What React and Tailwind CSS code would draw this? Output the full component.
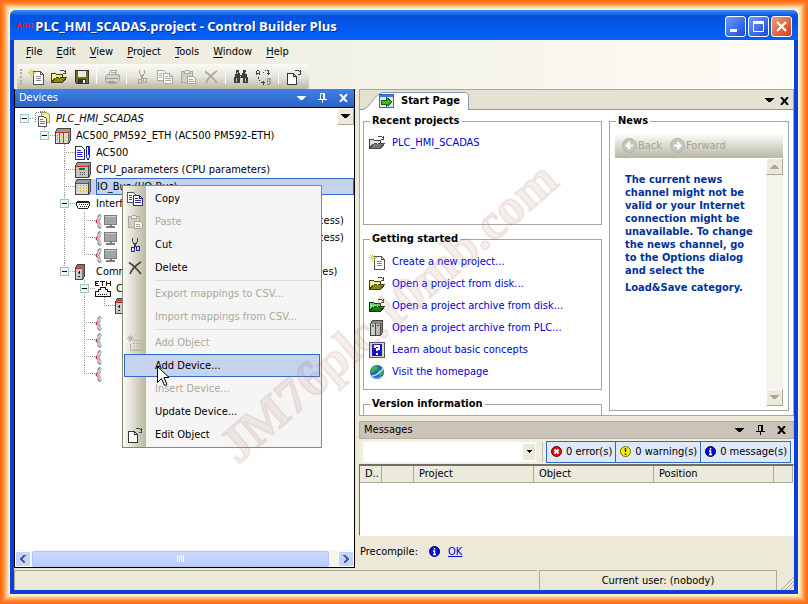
import React from "react";

/* ---------- icons ---------- */

function Svg({ w = 16, h = 16, children }) {
  return (
    <svg width={w} height={h} viewBox={`0 0 ${w} ${h}`} className="block shrink-0" shapeRendering="crispEdges" aria-hidden="true">
      {children}
    </svg>
  );
}

const NewIcon = () => (
  <Svg>
    <path d="M5.5 2.500h7l3 3v10h-10z" fill="#fff" stroke="#555" />
    <path d="M12.500 2.500v3h3" fill="none" stroke="#555" />
    <path d="M8 7.500h5M8 9.500h5M8 11.500h5" stroke="#888" />
    <path d="M3.500 0v8M0 3.500h8M1 1l5 5M6 1l-5 5" stroke="#e6dc1e" />
    <rect x="3" y="3" width="1" height="1" fill="#fff" />
  </Svg>
);

const FolderIcon = ({ back = "#f4ef7a", front = "#8d8318", line = "#45420d" }) => (
  <Svg>
    <path d="M.5 13.500v-9h4l1 1h6v3" fill={back} stroke={line} />
    <path d="M.5 13.500l4-5h11l-4 5z" fill={front} stroke={line} />
    <path d="M2 7.500h1M4 8.500h1M6 7.500h1M8 8.500h1" stroke="#fff" />
    <path d="M8.500 2.500l1-1h3l2 2M14.500 1v3h-3" fill="none" stroke="#444" />
  </Svg>
);

const SaveIcon = () => (
  <Svg>
    <path d="M1.500 1.500h13v13h-12l-1-1z" fill="#6f6f2a" stroke="#333" />
    <rect x="4" y="2" width="8" height="6" fill="#e8e8e8" />
    <rect x="4" y="10" width="8" height="5" fill="#333" />
    <rect x="9" y="11" width="2" height="3" fill="#fff" />
  </Svg>
);

const PrintIcon = () => (
  <Svg>
    <path d="M5.500 6l1-5h6l-1 5" fill="#eee" stroke="#aaa89c" />
    <path d="M7 3h4M7 5h4" stroke="#aaa89c" />
    <path d="M1.500 7.500l2-2h10l2 1v5l-2 2h-10l-2-1z" fill="#d4d3c8" stroke="#aaa89c" />
    <path d="M2 9.500h12M4 12.500h7" stroke="#9c9a8f" />
    <path d="M4 14.500h8" stroke="#aaa89c" />
  </Svg>
);

const CutIcon = ({ blade = "#444", grip = "#2a2a9a" }) => (
  <Svg>
    <path d="M5.500 1v3l3 5M10.500 1v3l-3 5" fill="none" stroke={blade} />
    <path d="M7.500 8v2M8.500 8v2" stroke={blade} />
    <rect x="4.500" y="10.500" width="3" height="4" fill="none" stroke={grip} />
    <rect x="9.500" y="9.500" width="3" height="4" fill="none" stroke={grip} />
    <path d="M7 9.500h3" stroke={grip} />
  </Svg>
);

const CopyIcon = ({ back = "#555", front = "#2a2a8c" }) => (
  <Svg>
    <path d="M.5 1.500h6l2 2v8h-8z" fill="#fff" stroke={back} />
    <path d="M2 4.500h3M2 6.500h3M2 8.500h3" stroke={back} />
    <path d="M6.500 4.500h6l3 3v7h-9z" fill="#fff" stroke={front} />
    <path d="M12.500 4.500v3h3M8 7.500h3M8 9.500h6M8 11.500h6" fill="none" stroke={front} />
  </Svg>
);

const PasteIcon = () => (
  <Svg>
    <path d="M1.500 2.500h11v11h-11z" fill="#cfcec6" stroke="#aaa89c" />
    <path d="M4.500 4.500v-2l1-1h3l1 1v2z" fill="#eee" stroke="#aaa89c" />
    <path d="M7.500 7.500h6l2 2v5h-8z" fill="#f4f4f0" stroke="#aaa89c" />
    <path d="M9 10.500h4M9 12.500h5" stroke="#aaa89c" />
  </Svg>
);

const DeleteIcon = ({ color = "#444" }) => (
  <svg width="16" height="16" viewBox="0 0 16 16" className="block shrink-0" aria-hidden="true">
    <path d="M2 2.500C6 5 10 9 14 14" fill="none" stroke={color} strokeWidth="1.600" />
    <path d="M14 2C9 5 5 9 3 14" fill="none" stroke={color} strokeWidth="1.600" />
  </svg>
);

const FindIcon = () => (
  <Svg>
    <path d="M3 1h3v3h1v2h2V4h1V1h3v3l1 2 1 4v4h-5v-5H7v5H1v-4l1-4 1-2z" fill="#3c3c3c" />
    <path d="M4 3v2M12 3v2M3 9v4M12 9v4" stroke="#bbb" />
    <rect x="7" y="7" width="1" height="1" fill="#ddd" />
  </Svg>
);

const ReplaceIcon = () => (
  <Svg>
    <path d="M.5 6v-3l1-2h1l1 2v3M1 4.500h2" fill="none" stroke="#444" />
    <path d="M11.500 9v6h2l1-1v-1l-1-1h-2M13 11.500l1-1v-1h-3" fill="none" stroke="#999" />
    <path d="M7 3.500h1M9 1.500h1M11 1.500h2M12.500 2v4M11 4.500h3" stroke="#444" />
    <path d="M2.500 8v2M3.500 11v1M5 13.500h4M7.500 11.500v4" stroke="#444" />
  </Svg>
);

const EditIcon = () => (
  <Svg>
    <path d="M1.500 4.500h6l3 3v8h-9z" fill="#fff" stroke="#333" />
    <path d="M7.500 4.500v3h3" fill="none" stroke="#333" />
    <path d="M8.500 2.500l1-1h3l2 2M14.500 1v4h-3" fill="none" stroke="#444" />
  </Svg>
);

const AddObjectIcon = () => (
  <Svg>
    <path d="M3.500 0v7M0 3.500h7M1 1l5 5M6 1l-5 5" stroke="#b4b3a6" />
    <path d="M7 5.500h8.500v10h-12v-7" fill="none" stroke="#b4b3a6" />
    <path d="M6 8h2M9 8h2M12 8h2M6 11h2M9 11h2M12 11h2M6 14h2M9 14h2M12 14h2" stroke="#b4b3a6" />
  </Svg>
);

const ProjectIcon = () => (
  <Svg>
    <path d="M.5 1.500h9M.5 1.500v10M9.500 .5h-6" fill="none" stroke="#777" strokeDasharray="1 1" />
    <path d="M6.500 1.500h5l3 2v8h-8z" fill="#f3ef80" stroke="#999" />
    <path d="M3.500 5.500h5l3 2v8h-8z" fill="#fff" stroke="#555" />
    <path d="M5 8.500h3M5 10.500h5M5 12.500h5" stroke="#777" />
  </Svg>
);

const RackIcon = () => (
  <Svg>
    <path d="M.5 3.500l2-3h13v12l-2 3h-13z" fill="#9a9a9a" stroke="#444" />
    <rect x="1" y="4" width="12" height="11" fill="#ddd" />
    <path d="M4.500 4v11M8.500 4v11M13.500 3v12" stroke="#666" />
    <rect x="1" y="4" width="12" height="1" fill="#d22" />
    <path d="M2.500 7v6" stroke="#888" strokeDasharray="1 1" />
    <rect x="6" y="7" width="2" height="3" fill="#ece22c" />
    <rect x="6" y="11" width="2" height="3" fill="#ece22c" />
    <rect x="10" y="7" width="2" height="3" fill="#ece22c" />
    <rect x="10" y="11" width="2" height="3" fill="#ece22c" />
  </Svg>
);

const AppIcon = () => (
  <Svg>
    <path d="M.5 1.500h6l3 3v10h-9z" fill="#fff" stroke="#333" />
    <path d="M2 5.500h4M2 7.500h6M2 9.500h5M2 11.500h6" stroke="#22f" />
    <path d="M11.500 1.500h3v10l-1 3h-1l-1-3z" fill="#fff" stroke="#22c" />
    <path d="M13 2v8" stroke="#22c" />
  </Svg>
);

const CpuIcon = () => (
  <Svg>
    <path d="M.5 3.500l2-3h13v12l-2 3h-13z" fill="#9a9a9a" stroke="#444" />
    <rect x="1" y="4" width="12" height="11" fill="#c4c4c4" />
    <rect x="1" y="4" width="12" height="1" fill="#d22" />
    <rect x="4" y="6" width="6" height="2" fill="#187818" />
    <path d="M5 10.500h5M5 12.500h5" stroke="#555" strokeDasharray="1 1" />
    <path d="M13.500 3v12" stroke="#444" />
  </Svg>
);

const IoIcon = () => (
  <Svg>
    <path d="M.5 3.500l2-3h13v12l-2 3h-13z" fill="#9a9a9a" stroke="#444" />
    <rect x="1" y="4" width="12" height="11" fill="#dcdcdc" />
    <rect x="1" y="4" width="12" height="1" fill="#d22" />
    {[2, 5, 8, 11].map((x) => (
      <React.Fragment key={x}>
        <rect x={x} y="6" width="1" height="1" fill="#888" />
        <rect x={x} y="8" width="1" height="2" fill="#e5c81e" />
        <rect x={x} y="11" width="1" height="2" fill="#e5c81e" />
      </React.Fragment>
    ))}
    <path d="M13.500 3v12" stroke="#444" />
  </Svg>
);

const SerialIcon = () => (
  <Svg>
    <path d="M1.500 6.500l1-1h11l1 1v3l-2 3h-9l-2-3z" fill="#fff" stroke="#222" />
    <path d="M2 6h12" stroke="#222" strokeWidth="2" />
    <path d="M4 8.500h9M5 10.500h7" stroke="#222" strokeDasharray="1 1" />
  </Svg>
);

const PlugIcon = () => (
  <svg width="8" height="16" viewBox="0 0 8 16" className="block shrink-0" aria-hidden="true">
    <path d="M6 2L4 3.500v3L2 8.500l2 2v3L6 15" fill="none" stroke="#888" strokeWidth="3" />
    <path d="M6 2.500L4 4v2.500L2.500 8.500l1.500 2V13l2 1.500" fill="none" stroke="#fff" />
    <rect x="1" y="7" width="1" height="3" fill="#d22" />
  </svg>
);

const MonitorIcon = () => (
  <Svg w={15} h={16}>
    <rect x="1.500" y="2.500" width="12" height="9" fill="#a5a5a5" stroke="#7c7c7c" />
    <path d="M2 3.500h11" stroke="#ccc" />
    <path d="M7.500 12v1M3 14h9" stroke="#7c7c7c" strokeWidth="2" />
  </Svg>
);

const ModuleIcon = () => (
  <Svg w={10}>
    <path d="M.5 3.500l2-3h7v12l-2 3h-7z" fill="#777" stroke="#444" />
    <rect x="1" y="4" width="6" height="11" fill="#ccc" />
    <rect x="1" y="4" width="6" height="1" fill="#d22" />
    <path d="M3 8.500h2M3 12.500h2M4.500 7v3" stroke="#222" />
  </Svg>
);

const EthIcon = () => (
  <Svg>
    <path d="M0 .5h4M0 2.500h3M0 4.500h4M.5 0v5M5 .5h5M7.500 0v5M11.500 0v5M15.500 0v5M11 2.500h5" stroke="#111" />
    <path d="M.5 15.500v-5h3v-2h2v-2h5v2h2v2h3v5z" fill="#f4f4f4" stroke="#111" />
    <path d="M3 13.500h10" stroke="#111" strokeDasharray="1 1" />
  </Svg>
);

const PlcIcon = () => (
  <Svg>
    <path d="M1.500 3.500l2-3h10v12l-2 3h-10z" fill="#8a8a8a" stroke="#444" />
    <rect x="2" y="4" width="4" height="11" fill="#ccc" />
    <rect x="7" y="4" width="4" height="11" fill="#bbb" />
    <rect x="3" y="5" width="2" height="2" fill="#1a1" />
    <rect x="8" y="5" width="2" height="1" fill="#b22" />
    <path d="M6.500 3v12M11.500 3v12" stroke="#444" />
  </Svg>
);

const HelpIcon = () => (
  <Svg>
    <rect x=".5" y=".5" width="15" height="15" fill="#d8d8d8" stroke="#555" />
    <rect x="3" y="2" width="10" height="12" fill="#1414c8" />
    <path d="M6 5.500V4h4v3H8v2M8 10.500v2" fill="none" stroke="#fff" strokeWidth="2" />
  </Svg>
);

const GlobeIcon = () => (
  <svg width="16" height="16" viewBox="0 0 16 16" className="block shrink-0" aria-hidden="true">
    <circle cx="8" cy="8" r="7" fill="#1f62c4" />
    <path d="M4 2.500C7 1 9 2 9 4S6 6 5 8 2 8 1.500 7 2.500 3.500 4 2.500zM10 6c2-1 4 0 4 2s-2 4-3 4-1-2-2-3 0-2.500 1-3z" fill="#3fae4c" />
    <path d="M1 12C5 13 12 9 15 3" fill="none" stroke="#bfe4ff" strokeWidth="1.500" />
    <path d="M2 13C6 15 11 14 13 12" fill="none" stroke="#6fc0ff" />
  </svg>
);

const StartIcon = () => (
  <Svg>
    <rect x=".5" y="1.500" width="14" height="13" fill="#dbe8fb" stroke="#3767b8" />
    <rect x="1" y="2" width="13" height="2" fill="#3f7be0" />
    <path d="M2 7h5V4l6 5-6 5v-3H2z" fill="#35c01c" stroke="#146808" />
  </Svg>
);

const StatusIcon = ({ kind }) => {
  const fill = kind === "error" ? "#e01010" : kind === "warning" ? "#f6f000" : "#0a0ae0";
  const edge = kind === "warning" ? "#6b6b10" : kind === "error" ? "#700" : "#006";
  return (
    <svg width="11" height="12" viewBox="0 0 11 12" className="block shrink-0" aria-hidden="true">
      <circle cx="5.500" cy="5.500" r="5" fill={fill} stroke={edge} />
      {kind === "error" && <path d="M3.500 3.500l4 4M7.500 3.500l-4 4" stroke="#fff" strokeWidth="2" />}
      {kind === "warning" && <path d="M5.500 2v4M5.500 7.500V9" stroke="#222" strokeWidth="1.500" />}
      {kind === "info" && <path d="M5.500 2v1.500M4 5h1.500v3.500M4 8.500h3" fill="none" stroke="#fff" strokeWidth="1.500" />}
    </svg>
  );
};

const Caret = () => (
  <Svg w={9} h={5}>
    <path d="M0 0h9v1H8v1H7v1H6v1H3V3H2V2H1V1H0z" fill="currentColor" />
  </Svg>
);
const SmallCaret = () => (
  <Svg w={5} h={3}>
    <path d="M0 0h5v1H4v1H3v1H2V2H1V1H0z" fill="currentColor" />
  </Svg>
);
const Pin = () => (
  <Svg w={9} h={10}>
    <path d="M2 .5h5M2.500 0v6M5.500 0v6M6.500 0v6M0 6.500h9M4.500 7v3" stroke="currentColor" />
  </Svg>
);
const Cross = () => (
  <svg width="9" height="8" viewBox="0 0 9 8" className="block" aria-hidden="true">
    <path d="M1 0l7 8M8 0L1 8" stroke="currentColor" strokeWidth="2" />
  </svg>
);

/* ---------- title, menu and tool bars ---------- */

function TitleBar() {
  const box = "flex h-[21px] w-[21px] items-center justify-center rounded-[3px] border border-white";
  return (
    <header className="flex h-[30px] shrink-0 items-center rounded-t-[6px] bg-linear-to-b from-[#3a93ff] via-[#0450dc] via-20% to-[#0262fb] pt-[2px] pr-[6px] pl-[6px]">
      <span className="font-['Liberation_Sans',sans-serif] text-[8px] leading-[14px] font-bold text-[#f0101c]">ABB</span>
      <h1 className="ml-[2px] flex-1 font-['Open_Sans',sans-serif] text-[13px] leading-5 font-bold whitespace-nowrap text-white [text-shadow:1px_1px_0_#0a2a8c]">
        PLC_HMI_SCADAS.project - Control Builder Plus
      </h1>
      <div className="flex gap-[2px]">
        <button aria-label="Minimize" className={`${box} bg-linear-to-br from-[#6f9bff] to-[#1848d8]`}>
          <Svg w={13} h={13}><rect x="1" y="9" width="7" height="3" fill="#fff" /></Svg>
        </button>
        <button aria-label="Maximize" className={`${box} bg-linear-to-br from-[#6f9bff] to-[#1848d8]`}>
          <Svg w={13} h={13}><path d="M1 1h11v11H1zM2 4v7h9V4z" fill="#fff" fillRule="evenodd" /></Svg>
        </button>
        <button aria-label="Close" className={`${box} bg-linear-to-br from-[#f09a7c] to-[#d03a10]`}>
          <svg width="13" height="13" viewBox="0 0 13 13" aria-hidden="true"><path d="M2 2l9 9M11 2l-9 9" stroke="#fff" strokeWidth="2.200" /></svg>
        </button>
      </div>
    </header>
  );
}

function MenuBar() {
  return (
    <nav className="flex h-6 shrink-0 items-center pl-[5px]" aria-label="Main menu">
      {["File", "Edit", "View", "Project", "Tools", "Window", "Help"].map((m) => (
        <button key={m} className="px-[7px]">
          <span className="underline underline-offset-2">{m[0]}</span>{m.slice(1)}
        </button>
      ))}
    </nav>
  );
}

const off = "#aaa89c";
const tools = [
  ["New", <NewIcon />], ["Open", <FolderIcon />], ["Save", <SaveIcon />], null,
  ["Print", <PrintIcon />], null,
  ["Cut", <CutIcon blade={off} grip={off} />], ["Copy", <CopyIcon back={off} front={off} />],
  ["Paste", <PasteIcon />], ["Delete", <DeleteIcon color={off} />], null,
  ["Find", <FindIcon />], ["Replace", <ReplaceIcon />], null,
  ["Edit Object", <EditIcon />],
];

function ToolBar() {
  return (
    <div className="ml-[3px] flex h-[25px] shrink-0 items-center self-start rounded-[3px] bg-linear-to-b from-[#fbfaf6] via-[#e6e5dc] to-[#b9b9a5] pr-1 pl-[3px]">
      <span className="mr-px h-4 w-[3px] border-l-2 border-dotted border-[#b0ae9c]" />
      {tools.map((t, i) =>
        t ? (
          <button key={i} aria-label={t[0]} className="flex w-[23px] justify-center">{t[1]}</button>
        ) : (
          <span key={i} className="mx-[3px] h-[14px] w-px bg-white" />
        )
      )}
    </div>
  );
}

/* ---------- devices panel ---------- */

function Guide({ kind }) {
  const expander = kind === "root" || kind === "first" || kind === "mid" || kind === "end";
  const up = kind !== "root" && kind !== "blank";
  const down = kind === "bar" || kind === "tee" || kind === "mid";
  const across = kind !== "bar" && kind !== "blank";
  return (
    <Svg w={20} h={17}>
      {up && <path d="M9.500 0v8" stroke="#9a9a9a" strokeDasharray="1 1" />}
      {down && <path d="M9.500 8v9" stroke="#9a9a9a" strokeDasharray="1 1" />}
      {across && <path d="M9 8.500h11" stroke="#9a9a9a" strokeDasharray="1 1" />}
      {expander && (
        <>
          <rect x="5.500" y="4.500" width="8" height="8" fill="#f1f6f6" stroke="#9cc5c8" />
          <path d="M7 8.500h5" stroke="#000" />
        </>
      )}
    </Svg>
  );
}

const rows = [
  { g: ["root"], icon: <ProjectIcon />, text: "PLC_HMI_SCADAS", italic: true },
  { g: ["blank", "first"], icon: <RackIcon />, text: "AC500_PM592_ETH (AC500 PM592-ETH)" },
  { g: ["blank", "blank", "tee"], icon: <AppIcon />, text: "AC500" },
  { g: ["blank", "blank", "tee"], icon: <CpuIcon />, text: "CPU_parameters (CPU parameters)" },
  { g: ["blank", "blank", "tee"], icon: <IoIcon />, text: "IO_Bus (I/O-Bus)", selected: true },
  { g: ["blank", "blank", "mid"], icon: <SerialIcon />, text: "Interfaces (Interfaces)" },
  { g: ["blank", "blank", "bar", "tee"], plug: true, icon: <MonitorIcon />, text: "COM1_Online_Access (COM1, Online Access)" },
  { g: ["blank", "blank", "bar", "tee"], plug: true, icon: <MonitorIcon />, text: "COM2_Online_Access (COM2, Online Access)" },
  { g: ["blank", "blank", "bar", "ell"], plug: true, icon: <MonitorIcon />, text: "FBP_Online_Access" },
  { g: ["blank", "blank", "end"], icon: <ModuleIcon />, text: "Communication_Units (Communication Modules)" },
  { g: ["blank", "blank", "blank", "mid"], icon: <EthIcon />, text: "CM_Ethernet" },
  { g: ["blank", "blank", "blank", "bar", "ell"], icon: <ModuleIcon />, text: "" },
  { g: ["blank", "blank", "blank", "tee"], plug: true },
  { g: ["blank", "blank", "blank", "tee"], plug: true },
  { g: ["blank", "blank", "blank", "tee"], plug: true },
  { g: ["blank", "blank", "blank", "ell"], plug: true },
];

function Tree() {
  return (
    <ul className="min-w-0 flex-1 overflow-hidden pt-[2px]">
      {rows.map((r, i) => (
        <li key={i} className="flex h-[17px] items-center whitespace-nowrap">
          {r.g.map((k, j) => <Guide key={j} kind={k} />)}
          {r.plug && <PlugIcon />}
          {r.icon && (
            <span className={`flex shrink-0 ${r.plug ? "w-5" : "w-[21px]"} ${r.selected ? "bg-[#c6d3ef]" : ""}`}>{r.icon}</span>
          )}
          {r.text && (
            <span className={r.selected ? "h-[17px] flex-1 border border-[#316ac5] bg-[#c6d3ef] leading-[15px]" : r.italic ? "italic" : ""}>
              {r.text}
            </span>
          )}
        </li>
      ))}
    </ul>
  );
}

function PanelButtons() {
  return (
    <div className="flex items-center gap-3">
      <button aria-label="Window position"><Caret /></button>
      <button aria-label="Auto hide"><Pin /></button>
      <button aria-label="Close"><Cross /></button>
    </div>
  );
}

function HorizontalScroll() {
  const cap = "flex h-4 w-4 items-center justify-center rounded-[2px] border border-white bg-[#c2d3fc]";
  return (
    <div className="flex h-[17px] shrink-0 items-center bg-[#f5f5f0]">
      <button aria-label="Scroll left" className={cap}>
        <Svg w={8} h={8}><path d="M6 0L2 4l4 4" fill="none" stroke="#4d6185" strokeWidth="2" /></Svg>
      </button>
      <div className="ml-px flex h-4 flex-1 items-center justify-center gap-px rounded-[2px] border border-[#b4c6f4] bg-linear-to-b from-[#cbdafe] to-[#b9cbfa]">
        {[0, 1, 2, 3].map((n) => <span key={n} className="h-[7px] w-px bg-white" />)}
      </div>
      <button aria-label="Scroll right" className={`${cap} ml-[9px]`}>
        <Svg w={8} h={8}><path d="M2 0l4 4-4 4" fill="none" stroke="#4d6185" strokeWidth="2" /></Svg>
      </button>
    </div>
  );
}

function DevicesPanel() {
  return (
    <section className="flex w-[341px] shrink-0 flex-col border border-t-0 border-black bg-white">
      <div className="flex h-[19px] shrink-0 items-center justify-between border-b border-black bg-linear-to-b from-[#3f82e8] to-[#2a62c4] pr-[6px] pl-1 text-white">
        <h2>Devices</h2>
        <PanelButtons />
      </div>
      <div className="flex min-h-0 flex-1 items-start">
        <Tree />
        <div className="-ml-4 py-px">
          <button aria-label="Tree options" className="flex h-4 w-4 items-center justify-center border border-t-0 border-l-0 border-[#aca899] bg-[#ece9d8]"><Caret /></button>
        </div>
      </div>
      <HorizontalScroll />
    </section>
  );
}

/* ---------- start page ---------- */

function Group({ title, className, children }) {
  return (
    <fieldset className={`min-w-0 border border-[#a5a5a5] ${className}`}>
      <legend className="ml-[6px] px-[2px] leading-[14px] font-bold">{title}</legend>
      {children}
    </fieldset>
  );
}

function StartLink({ icon, children }) {
  return (
    <a href="#" className="flex h-[22px] items-center gap-[7px] pl-[5px] whitespace-nowrap text-[#0000e0]">
      {icon}<span>{children}</span>
    </a>
  );
}

function NavIcon({ d }) {
  return (
    <svg width="15" height="15" viewBox="0 0 15 15" className="block" aria-hidden="true">
      <circle cx="7.500" cy="7.500" r="7" fill="#c6c5bc" stroke="#b3b2a8" />
      <path d={d} fill="none" stroke="#fff" strokeWidth="2" />
    </svg>
  );
}

function NewsGroup() {
  const cap = "flex h-[17px] w-[17px] items-center justify-center border border-t-white border-r-[#aca899] border-b-[#aca899] border-l-white bg-[#ece9d8] text-[#aca899]";
  return (
    <fieldset className="flex min-w-0 flex-[180] flex-col self-stretch border border-[#a5a5a5]">
      <legend className="ml-[6px] px-[2px] leading-[14px] font-bold">News</legend>
      <div className="flex h-full flex-col px-[5px] pt-[5px] pb-[4px]">
        <div className="flex h-[25px] shrink-0 items-center gap-2 bg-linear-to-b from-white to-[#b7b7a3] pl-[7px] text-[#a5a396]">
          <button className="flex items-center gap-px"><NavIcon d="M8 4L4.500 7.500 8 11M5 7.500h6" />Back</button>
          <button className="flex items-center gap-px"><NavIcon d="M7 4l3.500 3.500L7 11M10 7.500H4" />Forward</button>
        </div>
        <div className="flex min-h-0 flex-1">
          <div className="flex-1 pt-[15px] pl-[10px] leading-[13px] font-bold whitespace-nowrap text-[#003399]">
            <p>
              The current news<br />channel might not be<br />valid or your Internet<br />connection might be<br />
              unavailable. To change<br />the news channel, go<br />to the Options dialog<br />and select the
            </p>
            <p className="mt-1">Load&amp;Save category.</p>
          </div>
          <div className="flex w-[17px] shrink-0 flex-col justify-between bg-[#f4f3ec]">
            <button aria-label="Scroll up" className={cap}><span className="rotate-180"><Caret /></span></button>
            <button aria-label="Scroll down" className={cap}><Caret /></button>
          </div>
        </div>
      </div>
    </fieldset>
  );
}

function StartPage() {
  return (
    <section className="flex min-h-0 flex-1 flex-col overflow-hidden border border-[#aca899] bg-white">
      <div className="flex h-[20px] shrink-0 items-stretch justify-between border-b border-[#7f9db9] bg-[#e4e1d3]">
        <div className="relative -mb-px pl-[3px]">
          <svg width="106" height="19" viewBox="0 0 106 19" className="absolute bottom-0 left-[3px]" aria-hidden="true">
            <path d="M0 18.500C8 17 11 3 20 1.500H103l2 2V19H0z" fill="#fff" />
            <path d="M0 18.500C7 17 11 3 20 1.500H103l2.500 2V18.500" fill="none" stroke="#7f9db9" />
          </svg>
          <button className="relative flex h-full items-center gap-[6px] pt-[2px] pl-4 font-bold"><StartIcon />Start Page</button>
        </div>
        <div className="flex items-center gap-[6px] pt-[2px] pr-1">
          <button aria-label="Open pages"><Caret /></button>
          <button aria-label="Close page"><Cross /></button>
        </div>
      </div>
      <div className="flex min-h-0 flex-1 gap-[7px] pt-1 pr-1 pl-[3px]">
        <div className="min-w-0 flex-[239]">
          <Group title="Recent projects" className="h-[111px] pt-1">
            <StartLink icon={<FolderIcon back="#ddd" front="#777" line="#444" />}>PLC_HMI_SCADAS</StartLink>
          </Group>
          <Group title="Getting started" className="mt-[7px] pt-[5px] pb-[6px]">
            <StartLink icon={<NewIcon />}>Create a new project...</StartLink>
            <StartLink icon={<FolderIcon />}>Open a project from disk...</StartLink>
            <StartLink icon={<FolderIcon back="#5fdc5f" front="#117a11" line="#063a06" />}>Open a project archive from disk...</StartLink>
            <StartLink icon={<PlcIcon />}>Open a project archive from PLC...</StartLink>
            <StartLink icon={<HelpIcon />}>Learn about basic concepts</StartLink>
            <StartLink icon={<GlobeIcon />}>Visit the homepage</StartLink>
          </Group>
          <Group title="Version information" className="mt-[7px] h-10">{null}</Group>
        </div>
        <div className="flex min-w-0 flex-[180] pb-1"><NewsGroup /></div>
      </div>
    </section>
  );
}

/* ---------- messages ---------- */

function MessagesPanel() {
  const filter = "flex h-[22px] items-center gap-1 border border-[#316ac5] bg-[#dfe8f6] pr-[3px] pl-1 whitespace-nowrap";
  const th = "h-[17px] border-r border-b border-[#aca899] bg-[#ebeadb] p-0 pl-[5px] text-left font-normal overflow-hidden";
  return (
    <section className="shrink-0">
      <div className="flex h-[18px] items-center justify-between border border-[#b5ad9e] bg-[#cac4b8] pr-[7px] pl-1">
        <h2>Messages</h2>
        <PanelButtons />
      </div>
      <div className="flex h-[25px] items-center bg-[#efeee3] pr-[3px] pl-1">
        <div className="relative flex h-5 min-w-0 flex-1">
          <select aria-label="Message category" className="h-5 w-full appearance-none border border-white bg-white outline-none"><option></option></select>
          <span className="pointer-events-none absolute inset-y-[2px] right-px flex w-3 items-center justify-center bg-[#ece9d8]"><SmallCaret /></span>
        </div>
        <span className="mr-[3px] ml-[6px] h-5 w-px bg-[#c5c2b8]" />
        <button className={filter}><StatusIcon kind="error" />0 error(s)</button>
        <button className={`${filter} -ml-px`}><StatusIcon kind="warning" />0 warning(s)</button>
        <button className={`${filter} -ml-px`}><StatusIcon kind="info" />0 message(s)</button>
      </div>
      <div className="h-[72px] overflow-hidden border border-t-2 border-r-white border-b-white border-t-[#716f64] border-l-[#716f64] bg-white">
        <table className="w-full table-fixed border-separate border-spacing-0">
          <thead>
            <tr>
              <th className={`${th} w-[22px]`}>D..</th>
              <th className={`${th} w-8`} aria-label="Type"></th>
              <th className={`${th} w-[120px]`}>Project</th>
              <th className={`${th} w-[120px]`}>Object</th>
              <th className={`${th} w-[120px]`}>Position</th>
              <th className={th} aria-label="Filler"></th>
            </tr>
          </thead>
        </table>
      </div>
      <div className="flex h-8 items-center pl-px">
        <span>Precompile:</span>
        <span className="ml-[11px]"><StatusIcon kind="info" /></span>
        <a href="#" className="ml-2 text-[#0000e0] underline">OK</a>
      </div>
    </section>
  );
}

/* ---------- context menu ---------- */

const menu = [
  ["Copy", <CopyIcon />], ["Paste", <PasteIcon />, true], ["Cut", <CutIcon />], ["Delete", <DeleteIcon />], null,
  ["Export mappings to CSV...", null, true], ["Import mappings from CSV...", null, true], null,
  ["Add Object", <AddObjectIcon />, true], ["Add Device...", null, false, true],
  ["Insert Device...", null, true], ["Update Device...", null], ["Edit Object", <EditIcon />],
];

function ContextMenu() {
  return (
    <div role="menu" className="absolute top-[185px] left-[122px] w-[200px] border border-[#8a8a70] bg-[linear-gradient(90deg,#fbfbf6_0,#b9b9a2_23px,#f5f5f5_23px)] py-px">
      {menu.map((m, i) =>
        m ? (
          <button
            key={i}
            role="menuitem"
            disabled={!!m[2]}
            className={`flex h-[23px] w-full items-center px-px ${m[2] ? "text-[#aca899]" : "text-black"}`}
          >
            <span className={`flex h-[23px] flex-1 items-center border ${m[3] ? "border-[#316ac5] bg-[#c6d3ef]" : "border-transparent"}`}>
              <span className="ml-[2px] w-[28px]">{m[1]}</span>
              <span>{m[0]}</span>
            </span>
          </button>
        ) : (
          <div key={i} className="my-px ml-8 h-px bg-[#dfdfcc]" />
        )
      )}
    </div>
  );
}

function Pointer() {
  return (
    <svg width="13" height="21" viewBox="0 0 13 21" className="pointer-events-none absolute top-[366px] left-[157px]" aria-hidden="true">
      <path d="M.5.500v16l4-4 3 7 2.500-1-3-7h5z" fill="#fff" stroke="#000" />
    </svg>
  );
}

function Watermark() {
  return (
    <svg width="808" height="604" viewBox="0 0 808 604" className="pointer-events-none absolute top-0 left-0" aria-hidden="true">
      <text
        transform="translate(238 465) rotate(-41)"
        className="font-['Liberation_Serif',serif] text-[51px] font-bold"
        fill="#c08a70"
        fillOpacity="0.15"
        stroke="#a06a58"
        strokeOpacity="0.12"
        strokeWidth="2"
      >
        JM76plc.10mb.com
      </text>
    </svg>
  );
}

export default function App() {
  return (
    <div className="relative flex h-screen min-h-[604px] flex-col overflow-hidden bg-[#fff3d0] p-[10px] font-['DejaVu_Sans_Condensed','DejaVu_Sans',sans-serif] text-[11px] leading-[14px] text-black shadow-[inset_0_0_0_1px_#ff6e14,inset_0_0_0_2px_#ff7418,inset_0_0_0_3px_#ff7d24,inset_0_0_0_4px_#ff8a38,inset_0_0_0_5px_#ff9c50,inset_0_0_0_6px_#ffb06c,inset_0_0_0_7px_#ffc68a,inset_0_0_0_8px_#ffdaa6,inset_0_0_0_9px_#ffeabf]">
      <div className="flex min-h-0 flex-1 flex-col rounded-t-[6px] bg-[#0a3fd8]">
        <TitleBar />
        <main className="mx-1 mb-1 flex min-h-0 flex-1 flex-col bg-[#ece9d8]">
          <div className="flex flex-col bg-linear-to-r from-[#e9e9da] to-[#fefcf6]">
            <MenuBar />
            <ToolBar />
          </div>
          <div className="flex min-h-0 flex-1 gap-1">
            <DevicesPanel />
            <div className="flex min-w-0 flex-1 flex-col gap-[5px]">
              <StartPage />
              <MessagesPanel />
            </div>
          </div>
          <footer className="mt-[2px] flex h-5 shrink-0 gap-[2px]">
            <span className="flex-[524] border-t border-l border-[#aca899]" />
            <span className="flex flex-[237] items-center justify-center border-t border-r border-l border-[#aca899]">Current user: (nobody)</span>
            <span className="flex w-[15px] items-end justify-end">
              <Svg w={13} h={13}><path d="M0 13L13 0M4 13l9-9M8 13l5-5" stroke="#aca899" strokeWidth="1" /></Svg>
            </span>
          </footer>
        </main>
      </div>
      <ContextMenu />
      <Pointer />
      <Watermark />
    </div>
  );
}
